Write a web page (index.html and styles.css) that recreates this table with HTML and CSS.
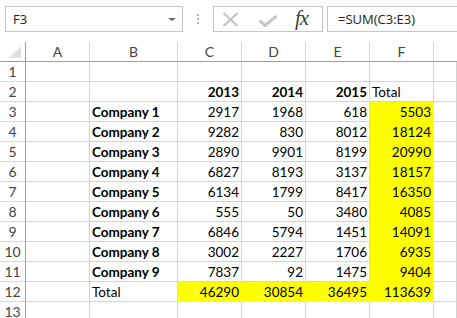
FILE: index.html
```html
<!DOCTYPE html>
<html lang="en">
<head>
  <meta charset="UTF-8" />
  <title>Sheet – SUM totals</title>
  <link rel="stylesheet" href="styles.css">
</head>
<body>

<div class="toolbar">
  <div class="name-box">
    <span>F3</span>
    <span class="drop"></span>
  </div>
  <div class="grip"><i></i><i></i><i></i></div>
  <div class="func-box">
    <svg class="icon-x" width="17" height="15" viewBox="0 0 17 15">
      <path d="M1.5 1 L15.5 14 M15.5 1 L1.5 14" stroke="#c3c3c3" stroke-width="2" fill="none"/>
    </svg>
    <svg class="icon-ok" width="20" height="12" viewBox="0 0 20 12">
      <path d="M1.5 5.5 L7 10.5 L18.5 1" stroke="#c6c6c6" stroke-width="3" fill="none"/>
    </svg>
    <span class="fx">fx</span>
  </div>
  <div class="formula">=SUM(C3:E3)</div>
</div>

<div class="sheet" id="sheet">
  <div class="corner"><span class="tri"></span></div>
  <div class="colhead">A</div>
  <div class="colhead">B</div>
  <div class="colhead">C</div>
  <div class="colhead">D</div>
  <div class="colhead">E</div>
  <div class="colhead">F</div>
  <div class="colhead last"></div>
</div>

<script>
  const rows = [
    ["", "", "", "", "", ""],
    ["", "", "2013", "2014", "2015", "Total"],
    ["", "Company 1", 2917, 1968, 618, 5503],
    ["", "Company 2", 9282, 830, 8012, 18124],
    ["", "Company 3", 2890, 9901, 8199, 20990],
    ["", "Company 4", 6827, 8193, 3137, 18157],
    ["", "Company 5", 6134, 1799, 8417, 16350],
    ["", "Company 6", 555, 50, 3480, 4085],
    ["", "Company 7", 6846, 5794, 1451, 14091],
    ["", "Company 8", 3002, 2227, 1706, 6935],
    ["", "Company 9", 7837, 92, 1475, 9404],
    ["", "Total", 46290, 30854, 36495, 113639],
    ["", "", "", "", "", ""]
  ];

  const sheet = document.getElementById("sheet");

  rows.forEach((row, r) => {
    const num = document.createElement("div");
    num.className = "rowhead";
    num.textContent = r + 1;
    sheet.appendChild(num);

    row.forEach((val, c) => {
      const cell = document.createElement("div");
      cell.className = "cell";
      cell.textContent = val;
      if (typeof val === "number" || (r === 1 && c >= 2 && c <= 4)) cell.classList.add("num");
      if (r === 1 && c >= 2 && c <= 4) cell.classList.add("bold");
      if (c === 1 && r >= 2 && r <= 10) cell.classList.add("bold");
      if ((c === 5 && r >= 2 && r <= 11) || (r === 11 && c >= 2)) cell.classList.add("fill");
      sheet.appendChild(cell);
    });

    const extra = document.createElement("div");
    extra.className = "cell";
    sheet.appendChild(extra);
  });
</script>

</body>
</html>
```

FILE: styles.css
```css
* {
  margin: 0;
  padding: 0;
  box-sizing: border-box;
}

html, body {
  background: #fff;
  width: 457px;
  height: 318px;
  overflow: hidden;
}

/* formula bar */
.toolbar {
  display: flex;
  align-items: flex-start;
  height: 42px;
  padding-top: 6px;
  font-family: "Open Sans", sans-serif;
  font-size: 13px;
  color: #222;
}

.toolbar > * {
  flex: none;
}

.name-box {
  display: flex;
  align-items: center;
  justify-content: space-between;
  margin-left: 5px;
  width: 178px;
  height: 26px;
  border: 1px solid #c6c6c6;
  padding: 0 6px 0 7px;
}

.drop {
  width: 0;
  height: 0;
  border-left: 4px solid transparent;
  border-right: 4px solid transparent;
  border-top: 3px solid #666;
  margin-top: 1px;
}

.grip {
  display: flex;
  flex-direction: column;
  gap: 2px;
  margin: 8px 0 0 14px;
  width: 16px;
}

.grip i {
  display: block;
  width: 2px;
  height: 2px;
  background: #b4b4b4;
}

.func-box {
  display: flex;
  align-items: center;
  width: 110px;
  height: 26px;
  border: 1px solid #c6c6c6;
  padding-left: 8px;
}

.icon-x {
  flex: none;
  margin-top: 1px;
}

.icon-ok {
  flex: none;
  margin: 3px 0 0 19px;
}

.fx {
  margin: -1px 0 0 17px;
  font-family: "Liberation Serif", serif;
  font-style: italic;
  font-size: 21px;
  color: #404040;
  letter-spacing: -1px;
}

.toolbar > .formula {
  flex: 1;
  height: 26px;
  margin-left: 4px;
  border: 1px solid #c6c6c6;
  border-right: none;
  padding: 3px 0 0 10px;
}

/* grid */
.sheet {
  display: grid;
  grid-template-columns: 26px 64px 88px 64px 64px 64px 64px 1fr;
  grid-auto-rows: 20px;
  font-family: Lato, sans-serif;
  font-size: 13.5px;
  color: #000;
}

.corner,
.colhead {
  border-bottom: 1px solid #9e9e9e;
  border-right: 1px solid #d9d9d9;
  color: #444;
  text-align: center;
  line-height: 19px;
  font-size: 14px;
}

.corner {
  position: relative;
  border-right-color: #9e9e9e;
}

.tri {
  position: absolute;
  right: 4px;
  bottom: 3px;
  width: 0;
  height: 0;
  border-left: 12px solid transparent;
  border-bottom: 12px solid #dfdfdf;
}

.colhead.last {
  border-right: none;
}

.rowhead {
  border-right: 1px solid #9e9e9e;
  border-bottom: 1px solid #d9d9d9;
  color: #444;
  text-align: center;
  line-height: 20px;
  font-size: 14px;
}

.cell {
  border-right: 1px solid #d4d4d4;
  border-bottom: 1px solid #d4d4d4;
  padding: 0 2px;
  line-height: 21px;
  white-space: nowrap;
  overflow: hidden;
}

.num {
  text-align: right;
}

.bold {
  font-weight: bold;
}

.fill {
  background: #ffff00;
  border-color: #ffff00;
}
```
